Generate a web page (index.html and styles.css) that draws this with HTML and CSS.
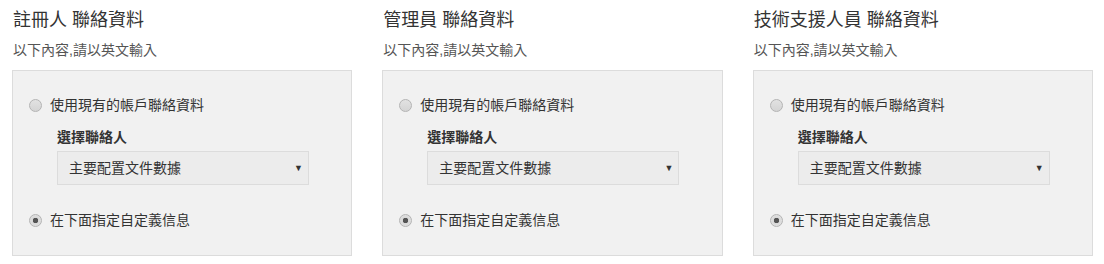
FILE: index.html
```html
<!DOCTYPE html>
<html>

<head>
  <title>聯絡資料</title>
  <link rel="stylesheet" href="styles.css">
</head>

<body>
  <div class="contacts">

    <div class="contact-col">
      <h2>註冊人 聯絡資料</h2>
      <p class="hint">以下內容,請以英文輸入</p>
      <div class="panel">
        <label class="option">
          <input type="radio" name="registrant">
          <span>使用現有的帳戶聯絡資料</span>
        </label>
        <div class="pick">
          <div class="pick-label">選擇聯絡人</div>
          <div class="select-wrap">
            <select>
              <option>主要配置文件數據</option>
            </select>
            <span class="arrow">▼</span>
          </div>
        </div>
        <label class="option option-last">
          <input type="radio" name="registrant" checked>
          <span>在下面指定自定義信息</span>
        </label>
      </div>
    </div>

    <div class="contact-col">
      <h2>管理員 聯絡資料</h2>
      <p class="hint">以下內容,請以英文輸入</p>
      <div class="panel">
        <label class="option">
          <input type="radio" name="admin">
          <span>使用現有的帳戶聯絡資料</span>
        </label>
        <div class="pick">
          <div class="pick-label">選擇聯絡人</div>
          <div class="select-wrap">
            <select>
              <option>主要配置文件數據</option>
            </select>
            <span class="arrow">▼</span>
          </div>
        </div>
        <label class="option option-last">
          <input type="radio" name="admin" checked>
          <span>在下面指定自定義信息</span>
        </label>
      </div>
    </div>

    <div class="contact-col">
      <h2>技術支援人員 聯絡資料</h2>
      <p class="hint">以下內容,請以英文輸入</p>
      <div class="panel">
        <label class="option">
          <input type="radio" name="tech">
          <span>使用現有的帳戶聯絡資料</span>
        </label>
        <div class="pick">
          <div class="pick-label">選擇聯絡人</div>
          <div class="select-wrap">
            <select>
              <option>主要配置文件數據</option>
            </select>
            <span class="arrow">▼</span>
          </div>
        </div>
        <label class="option option-last">
          <input type="radio" name="tech" checked>
          <span>在下面指定自定義信息</span>
        </label>
      </div>
    </div>

  </div>
</body>

</html>
```

FILE: styles.css
```css
body {
  font-family: "Liberation Sans", Arial, "Noto Sans CJK TC", sans-serif;
  margin: 0;
  padding: 0;
  background-color: #fff;
  color: #333;
}

.contacts {
  display: grid;
  grid-template-columns: repeat(3, 1fr);
  column-gap: 30px;
  padding: 0 11px 0 12px;
}

h2 {
  font-size: 18px;
  font-weight: normal;
  line-height: 24px;
  margin: 8px 0 0 1px;
  color: #333;
}

.hint {
  font-size: 14px;
  line-height: 20px;
  margin: 8px 0 0 1px;
  color: #555;
}

.panel {
  margin-top: 10px;
  height: 186px;
  box-sizing: border-box;
  padding: 24px 16px 0 16px;
  background-color: #f1f1f1;
  border: 1px solid #dcdcdc;
}

.option {
  display: flex;
  align-items: center;
  gap: 8px;
  font-size: 14px;
  line-height: 20px;
  color: #333;
  cursor: pointer;
}

.option-last {
  margin-top: 25px;
}

.option input[type="radio"] {
  appearance: none;
  -webkit-appearance: none;
  width: 13px;
  height: 13px;
  margin: 0;
  border-radius: 50%;
  border: 1px solid #b4b4b4;
  box-sizing: border-box;
  background: linear-gradient(#e2e2e2, #d4d4d4);
  flex-shrink: 0;
}

.option input[type="radio"]:checked {
  background: radial-gradient(circle, #555 0, #555 2.5px, #d9d9d9 3px, #e6e6e6 100%);
}

.pick {
  margin-left: 28px;
}

.pick-label {
  margin-top: 12px;
  font-size: 14px;
  line-height: 20px;
  font-weight: bold;
  color: #333;
}

.select-wrap {
  position: relative;
  margin-top: 4px;
  width: 252px;
}

.select-wrap select {
  appearance: none;
  -webkit-appearance: none;
  display: block;
  width: 100%;
  height: 34px;
  padding: 0 24px 0 11px;
  font-family: inherit;
  font-size: 14px;
  color: #333;
  background-color: #ececec;
  border: 1px solid #dcdcdc;
  border-radius: 0;
  outline: none;
}

.arrow {
  position: absolute;
  right: 6px;
  top: 10px;
  font-size: 9px;
  line-height: 14px;
  color: #333;
  pointer-events: none;
}
```
